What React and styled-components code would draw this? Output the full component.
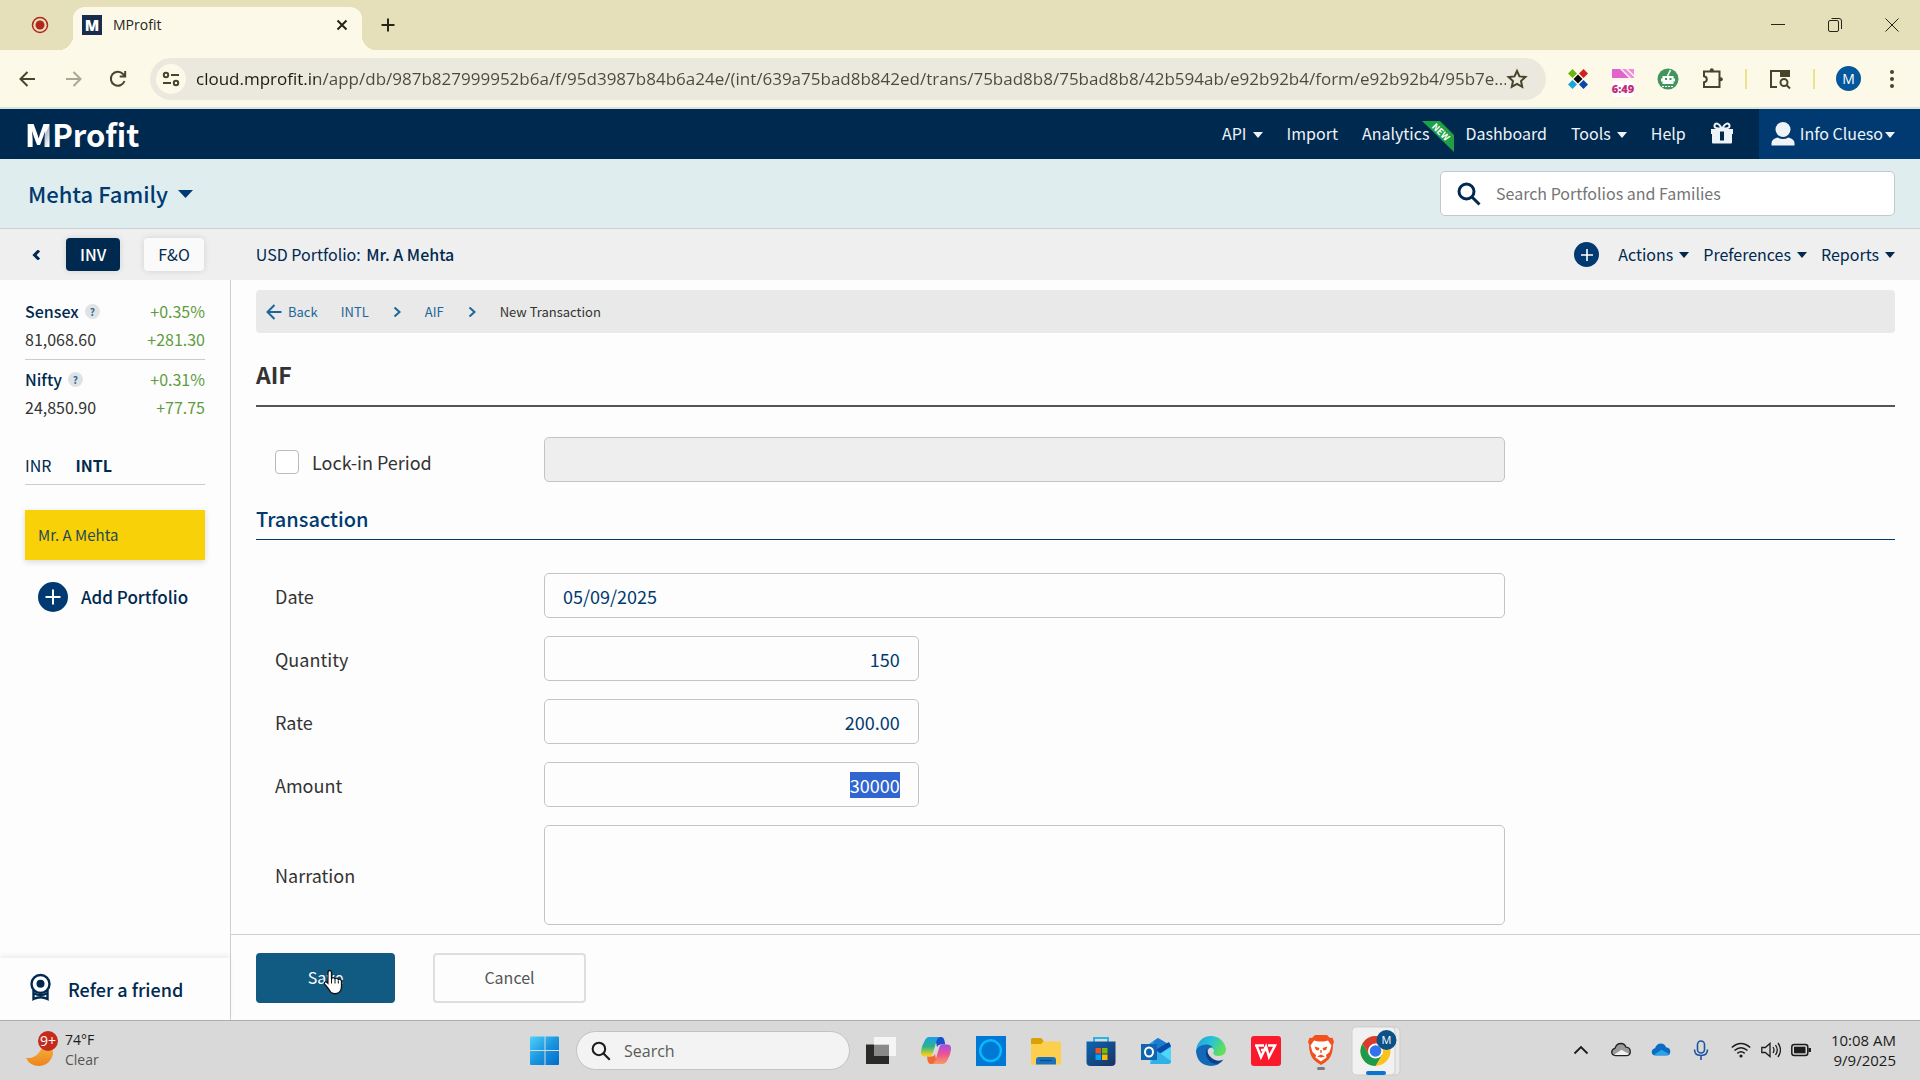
import { useEffect, useRef, useState } from "react";
import styled, { createGlobalStyle, css } from "styled-components";

const GlobalStyle = createGlobalStyle`
  * {
    box-sizing: border-box;
  }
  body {
    margin: 0;
    background: #fdfdfd;
    color: #333;
    font-family: "Noto Sans CJK SC", "Noto Sans", sans-serif;
    font-size: 16px;
    line-height: 24px;
  }
  button, input, textarea {
    font-family: inherit;
  }
  ::selection {
    background: #3165cf;
    color: #fff;
  }
`;

const systemFont = css`
  font-family: "Open Sans", "Noto Sans", sans-serif;
`;

const Page = styled.div`
  display: flex;
  flex-direction: column;
  min-height: 100vh;
  svg {
    display: block;
    flex: none;
  }
`;

const PlainButton = styled.button`
  display: flex;
  align-items: center;
  justify-content: center;
  padding: 0;
  border: none;
  background: none;
  color: inherit;
  font-size: inherit;
  font-weight: inherit;
  line-height: inherit;
  white-space: nowrap;
  cursor: pointer;
`;

/* ---------- browser ---------- */

const TabStrip = styled.div`
  ${systemFont}
  display: flex;
  align-items: flex-end;
  height: 50px;
  background: #e6e0ba;
  color: #26251a;
`;

const RecordSlot = styled.div`
  display: flex;
  align-items: center;
  justify-content: center;
  width: 73px;
  height: 50px;
  padding-left: 7px;
`;

const Tab = styled.div`
  position: relative;
  display: flex;
  align-items: center;
  width: 289px;
  height: 43px;
  padding: 0 13px 7px 9px;
  border-radius: 12px 12px 0 0;
  background: #fdf9e9;
  font-size: 14px;
  &::before,
  &::after {
    content: "";
    position: absolute;
    bottom: 0;
    width: 14px;
    height: 14px;
  }
  &::before {
    right: 100%;
    background: radial-gradient(circle at 0 0, transparent 14px, #fdf9e9 14px);
  }
  &::after {
    left: 100%;
    background: radial-gradient(circle at 100% 0, transparent 14px, #fdf9e9 14px);
  }
`;

const Favicon = styled.span`
  width: 20px;
  height: 20px;
  margin-right: 11px;
  background: #182c4c;
  color: #fff;
  font-size: 15px;
  font-weight: 800;
  line-height: 20px;
  text-align: center;
`;

const TabTitle = styled.span`
  flex: 1;
`;

const NewTab = styled(PlainButton)`
  width: 52px;
  height: 50px;
`;

const WindowControls = styled.div`
  display: flex;
  height: 50px;
  margin-left: auto;
  ${PlainButton} {
    width: 57px;
    height: 50px;
  }
`;

const BrowserBar = styled.div`
  ${systemFont}
  display: flex;
  align-items: center;
  height: 59px;
  padding: 0 20px 0 16px;
  border-bottom: 2px solid #d9e5dc;
  background: #fdf9e9;
  color: #47452b;
`;

const NavIcons = styled.div`
  display: flex;
  gap: 21px;
  margin-right: 20px;
`;

const AddressPill = styled.div`
  display: flex;
  align-items: center;
  flex: 1;
  height: 42px;
  padding: 0 18px 0 6px;
  border-radius: 21px;
  background: #ebe8de;
`;

const SiteInfo = styled(PlainButton)`
  width: 30px;
  height: 30px;
  margin-right: 10px;
  border-radius: 50%;
  background: #fdf9e9;
`;

/* host part is darker than the rest of the address */
const AddressInput = styled.input`
  flex: 1;
  min-width: 0;
  padding: 0;
  border: none;
  outline: none;
  background: linear-gradient(90deg, #1c1b12 119px, #4b493e 119px);
  background-clip: text;
  color: transparent;
  font-size: 17px;
  line-height: 28px;
`;

const Extensions = styled.div`
  display: flex;
  align-items: center;
  gap: 21px;
  margin-left: 21px;
`;

const TimerIcon = styled.span`
  display: flex;
  flex-direction: column;
  align-items: center;
  width: 26px;
  padding-top: 8px;
  color: #c22a7c;
  font-size: 11px;
  font-weight: 700;
  line-height: 16px;
  b {
    margin-top: 3px;
    border-radius: 4px;
    background: #fff;
  }
`;

const BarDivider = styled.span`
  width: 2px;
  height: 20px;
  background: #ece292;
`;

const Avatar = styled.span`
  width: 25px;
  height: 25px;
  border-radius: 50%;
  background: #04579b;
  color: #fff;
  font-size: 14px;
  line-height: 25px;
  text-align: center;
`;

/* ---------- application header ---------- */

const TopNav = styled.header`
  display: flex;
  align-items: center;
  height: 50px;
  padding-left: 25px;
  background: #00294f;
  color: #eef3f8;
`;

const Logo = styled.a`
  display: flex;
  color: #fff;
  font-size: 31px;
  font-weight: 700;
  line-height: 40px;
  text-decoration: none;
`;

const LogoInitial = styled.span`
  background: linear-gradient(115deg, #fff 64%, #b4bcc8 66%, #fff 84%);
  background-clip: text;
  color: transparent;
  font-weight: 900;
`;

const TopLinks = styled.nav`
  display: flex;
  align-items: center;
  gap: 24px;
  margin-left: auto;
  padding-right: 25px;
`;

const TopLink = styled.a`
  position: relative;
  margin-right: ${(props) => (props.$badge ? "12px" : "0")};
  padding-bottom: 2px;
  color: inherit;
  text-decoration: none;
`;

const NewRibbon = styled.svg`
  position: absolute;
  top: 0;
  left: 60px;
`;

const MenuButton = styled(PlainButton)`
  gap: ${(props) => props.$gap || 6}px;
  padding-bottom: 2px;
  svg {
    margin-top: 3px;
  }
`;

const UserMenu = styled(PlainButton)`
  gap: 5px;
  align-self: stretch;
  padding: 0 25px 0 12px;
  background: #013a70;
`;

const UserName = styled.span`
  display: flex;
  align-items: center;
  gap: 2px;
  padding-bottom: 2px;
  svg {
    margin-top: 3px;
  }
`;

const FamilyBar = styled.div`
  display: flex;
  align-items: center;
  justify-content: space-between;
  height: 70px;
  padding: 0 25px 0 28px;
  border-bottom: 1px solid #ccd2d3;
  background: #dfedef;
  color: #003a70;
  font-size: 22px;
  font-weight: 500;
`;

const SearchBox = styled.label`
  display: flex;
  align-items: center;
  flex: 0 1 455px;
  gap: 15px;
  height: 45px;
  padding: 0 16px;
  border: 1px solid #c3c8ca;
  border-radius: 5px;
  background: #fff;
  color: #00294f;
`;

const SearchInput = styled.input`
  flex: 1;
  min-width: 0;
  padding: 0 0 2px;
  border: none;
  outline: none;
  background: none;
  font-size: 16px;
  &::placeholder {
    color: #757575;
  }
`;

const SubBar = styled.div`
  display: flex;
  align-items: center;
  height: 51px;
  padding: 0 25px 0 32px;
  background: #efefef;
  color: #00294f;
`;

const SegmentButton = styled(PlainButton)`
  height: 33px;
  padding: 0 14px 2px;
  border-radius: 4px;
  margin-left: 24px;
  background: ${(props) => (props.$active ? "#00294f" : "#fafafa")};
  color: ${(props) => (props.$active ? "#fff" : "#00294f")};
  font-weight: ${(props) => (props.$active ? 500 : 400)};
  box-shadow: 0 0 6px rgba(0, 0, 0, 0.12);
`;

const PortfolioName = styled.div`
  margin-left: 52px;
  padding-bottom: 2px;
  strong {
    margin-left: 2px;
    font-weight: 500;
  }
`;

const SubActions = styled.div`
  display: flex;
  align-items: center;
  gap: 14px;
  margin-left: auto;
`;

const AddButton = styled(PlainButton)`
  margin-right: 5px;
`;

const AddCircle = styled.span`
  display: flex;
  align-items: center;
  justify-content: center;
  width: ${(props) => props.$size}px;
  height: ${(props) => props.$size}px;
  border-radius: 50%;
  background: #013a70;
`;

/* ---------- body ---------- */

const Body = styled.div`
  display: flex;
  flex: 1;
`;

const Sidebar = styled.aside`
  display: flex;
  flex-direction: column;
  width: 231px;
  flex: none;
  border-right: 1px solid #d0d0d0;
`;

const SidebarInner = styled.div`
  flex: 1;
  padding: 17px 25px 0;
`;

const IndexCard = styled.div`
  padding-bottom: 6px;
  margin-bottom: 5px;
  border-bottom: 1px solid ${(props) => (props.$last ? "transparent" : "#ccc")};
`;

const IndexRow = styled.div`
  display: flex;
  align-items: center;
  justify-content: space-between;
  height: 28px;
`;

const IndexName = styled.span`
  display: flex;
  align-items: center;
  gap: 6px;
  color: #00294f;
  font-weight: 500;
`;

const Help = styled(PlainButton)`
  width: 15px;
  height: 15px;
  border-radius: 50%;
  background: #dfe3e4;
  color: #2b6d98;
  font-size: 10px;
  font-weight: 700;
  line-height: 15px;
`;

const Gain = styled.span`
  color: #5d9c3f;
`;

const CurrencyTabs = styled.div`
  display: flex;
  gap: 24px;
  height: 39px;
  margin-top: 18px;
  border-bottom: 1px solid #ccc;
`;

const CurrencyTab = styled(PlainButton)`
  color: #00294f;
  font-weight: ${(props) => (props.$active ? 700 : 400)};
`;

const PortfolioItem = styled(PlainButton)`
  justify-content: flex-start;
  width: 100%;
  height: 50px;
  margin-top: 25px;
  padding: 0 13px;
  background: #f9d108;
  color: #1f4a54;
  font-size: 15px;
  box-shadow: 0 2px 6px rgba(0, 0, 0, 0.15);
`;

const AddPortfolio = styled(PlainButton)`
  gap: 13px;
  margin: 22px 0 0 13px;
  color: #00294f;
  font-size: 17px;
  font-weight: 500;
`;

const ReferLink = styled.a`
  display: flex;
  align-items: center;
  gap: 17px;
  height: 62px;
  padding: 0 30px;
  color: #00294f;
  font-size: 18px;
  font-weight: 500;
  text-decoration: none;
  box-shadow: 0 -3px 5px rgba(0, 0, 0, 0.06);
  svg {
    margin-bottom: 4px;
  }
`;

const Main = styled.main`
  display: flex;
  flex-direction: column;
  flex: 1;
  min-width: 0;
`;

const Content = styled.div`
  flex: 1;
  padding: 10px 25px 0;
`;

const Breadcrumb = styled.nav`
  display: flex;
  align-items: center;
  gap: 23px;
  height: 43px;
  padding: 0 10px;
  border-radius: 4px;
  background: #e9e9e9;
  font-size: 13px;
`;

const Crumb = styled.a`
  display: flex;
  align-items: center;
  gap: 6px;
  color: #1c6698;
  text-decoration: none;
`;

const PageTitle = styled.h1`
  margin: 0;
  padding: 25px 0 15px;
  border-bottom: 2px solid #555;
  color: #333;
  font-size: 23px;
  font-weight: 700;
  line-height: 32px;
`;

const SectionTitle = styled.h2`
  margin: 0 0 33px;
  padding: 21px 0 4px;
  border-bottom: 1px solid #003a70;
  color: #003a70;
  font-size: 20px;
  font-weight: 500;
  line-height: 32px;
`;

const Fields = styled.div`
  display: flex;
  flex-direction: column;
  gap: 18px;
  padding-top: ${(props) => props.$top || 0}px;
`;

const FieldRow = styled.div`
  display: grid;
  grid-template-columns: 269px minmax(0, 1fr) 390px;
  align-items: center;
  padding-left: 19px;
`;

const FieldLabel = styled.label`
  display: flex;
  align-items: center;
  gap: 13px;
  padding-top: ${(props) => (props.$check ? "5px" : "0")};
  font-size: 18px;
`;

const CheckBox = styled.input`
  appearance: none;
  width: 24px;
  height: 24px;
  margin: 0;
  border: 1px solid #bbb;
  border-radius: 4px;
  background: #fff;
`;

const fieldBox = css`
  border: 1px solid #c4c4c4;
  border-radius: 5px;
  outline: none;
  background: #fdfdfd;
  color: #003a70;
  font-size: 18px;
`;

const TextField = styled.input`
  ${fieldBox}
  width: ${(props) => (props.$short ? "39%" : "100%")};
  height: 45px;
  padding: 0 18px;
  text-align: ${(props) => (props.$short ? "right" : "left")};
  caret-color: transparent;
  &:disabled {
    background: #eee;
  }
`;

const NarrationField = styled.textarea`
  ${fieldBox}
  display: block;
  width: 100%;
  height: 100px;
  padding: 10px 18px;
  resize: none;
`;

const FormFooter = styled.footer`
  display: flex;
  align-items: center;
  gap: 38px;
  height: 86px;
  padding: 1px 25px 0;
  border-top: 1px solid #d0d0d0;
`;

const FooterButton = styled(PlainButton)`
  position: relative;
  width: ${(props) => (props.$primary ? 139 : 153)}px;
  height: 50px;
  padding-bottom: 2px;
  border: 2px solid ${(props) => (props.$primary ? "#115a82" : "#dedede")};
  border-radius: 4px;
  background: ${(props) => (props.$primary ? "#115a82" : "#fdfdfd")};
  color: ${(props) => (props.$primary ? "#fff" : "#555")};
`;

const Pointer = styled.svg`
  position: absolute;
  top: 14px;
  left: 64px;
`;

/* ---------- taskbar ---------- */

const Taskbar = styled.div`
  ${systemFont}
  display: grid;
  grid-template-columns: 1fr auto 1fr;
  align-items: center;
  height: 60px;
  padding: 0 24px 0 26px;
  border-top: 1px solid #adadad;
  background: #d9d9d9;
  color: #1c1c1c;
  font-size: 14px;
  line-height: 20px;
`;

const Weather = styled.div`
  display: flex;
  align-items: center;
  gap: 5px;
  padding-bottom: 2px;
  span {
    display: block;
    color: #555;
  }
`;

const Dock = styled.div`
  display: flex;
  align-items: center;
  gap: 25px;
  margin-left: 9px;
`;

const ActiveApp = styled.div`
  margin-left: -10px;
`;

const TaskSearch = styled.label`
  display: flex;
  align-items: center;
  gap: 13px;
  width: 274px;
  height: 39px;
  margin: 0 -9px;
  padding: 0 14px;
  border: 1px solid #c2c2c2;
  border-radius: 20px;
  background: #f3f3f3;
  input {
    width: 200px;
    padding: 0;
    border: none;
    background: none;
    font-size: 16px;
  }
  input::placeholder {
    color: #5b5b5b;
  }
`;

const Tray = styled.div`
  display: flex;
  align-items: center;
  justify-content: flex-end;
  gap: 20px;
  padding-bottom: 2px;
`;

const TrayGroup = styled.div`
  display: flex;
  gap: 10px;
`;

const Clock = styled.div`
  font-size: 15px;
  text-align: right;
`;

/* ---------- icons ---------- */

const Stroke = ({ size = 20, width = 2, children, ...rest }) => (
  <svg
    width={size}
    height={size}
    viewBox={`0 0 ${size} ${size}`}
    fill="none"
    stroke="currentColor"
    strokeWidth={width}
    {...rest}
  >
    {children}
  </svg>
);

const Caret = ({ w = 10, h = 6 }) => (
  <svg width={w} height={h} viewBox="0 0 10 6" preserveAspectRatio="none">
    <path d="M0 0h10L5 6z" fill="currentColor" />
  </svg>
);

const SearchIcon = ({ size = 24, width = 3 }) => (
  <svg
    width={size}
    height={size}
    viewBox="0 0 24 24"
    fill="none"
    stroke="currentColor"
    strokeWidth={width}
  >
    <circle cx="9.5" cy="9.5" r="7.5" />
    <path d="M15 15l7.5 7.5" />
  </svg>
);

const Plus = ({ size = 20 }) => (
  <svg width={size} height={size} viewBox="0 0 20 20">
    <path d="M10 2.5v15M2.5 10h15" stroke="#fff" strokeWidth="2" />
  </svg>
);

const GiftIcon = () => (
  <svg width="24" height="22" viewBox="0 0 24 22" fill="#eef3f8">
    <path d="M1 7h22v5H1zM2 12h20v8.5q0 1-1 1H3q-1 0-1-1z" />
    <path
      d="M11.5 6.500C9 .5 5 .5 4.500 3.500S8 6.500 11.500 6.500zM12.500 6.500C15 .5 19 .5 19.500 3.500S16 6.500 12.500 6.500z"
      fill="none"
      stroke="#eef3f8"
      strokeWidth="2"
    />
    <path d="M10 9.500h4v9h-4z" fill="#00294f" />
  </svg>
);

const UserIcon = () => (
  <svg width="24" height="24" viewBox="0 0 24 24" fill="#eef3f8">
    <circle cx="12" cy="7.5" r="7.5" />
    <path d="M.5 23.500v-2.500q0-4 6-5.500 5.500 3 11 0 6 1.500 6 5.500v2.500z" />
  </svg>
);

const AwardIcon = () => (
  <svg
    width="21"
    height="28"
    viewBox="0 0 21 28"
    fill="none"
    stroke="#00294f"
    strokeWidth="2.4"
  >
    <circle cx="10.500" cy="11" r="9" />
    <circle cx="10.500" cy="10.800" r="4" fill="#00294f" stroke="none" />
    <path d="M3.500 17v9q7-3.500 14 0V17" />
    <path d="M4 20.500q6.500 3 13 0" />
  </svg>
);

const PointerIcon = () => (
  <Pointer width="22" height="27" viewBox="0 0 22 27">
    <path
      d="M6 3.500Q6 1.500 7.700 1.500T9.500 3.500V10q.3-1.500 1.800-1.400T13 10.300q.3-1.300 1.700-1.200T16.300 11q.3-1 1.600-.8T19.500 12.200V18q0 3.500-2.500 5.500-4 2.500-8 0C7 20.500 4.500 17 2.700 15.200q-1-1.200.2-2t3 1z"
      fill="#fff"
      stroke="#111"
      strokeWidth="1.300"
    />
    <path d="M9.500 10v4.500M13 10.500v4M16.300 11.500v3" stroke="#111" />
  </Pointer>
);

const WindowsIcon = () => (
  <svg width="30" height="30" viewBox="0 0 30 30">
    <defs>
      <linearGradient id="win" x1="0" y1="0" x2="1" y2="1">
        <stop offset="0" stopColor="#4fd2fb" />
        <stop offset=".5" stopColor="#1a96e0" />
        <stop offset="1" stopColor="#006bca" />
      </linearGradient>
    </defs>
    <path d="M1 .5h13.500V14H0V1.500zM15.500.5H28q1 0 1 1V14H15.500zM0 15h14.500v14H1q-1 0-1-1zM15.500 15H29v13q0 1-1 1H15.500z" fill="url(#win)" />
  </svg>
);

const TaskViewIcon = () => (
  <svg width="30" height="30" viewBox="0 0 30 30">
    <path d="M0 8.500h23V28H0z" fill="#2a2a28" />
    <path d="M8 1h22v19H8z" fill="#fff" opacity=".45" />
    <path d="M8 1h22v19h-7V8.500H8z" fill="#f8f8f8" opacity=".8" />
  </svg>
);

const CopilotIcon = () => (
  <svg width="30" height="30" viewBox="0 0 30 30">
    <defs>
      <linearGradient id="copA" x1="0" y1="0" x2="0" y2="1">
        <stop offset="0" stopColor="#1aa0e8" />
        <stop offset=".5" stopColor="#2bb38b" />
        <stop offset=".9" stopColor="#e9cf20" />
      </linearGradient>
      <linearGradient id="copB" x1="0" y1="0" x2="0" y2="1">
        <stop offset="0" stopColor="#a34de4" />
        <stop offset=".5" stopColor="#ee5494" />
        <stop offset="1" stopColor="#f79c5b" />
      </linearGradient>
    </defs>
    <path d="M14 1h6q2.500 0 3.300 3l1 4.500h-4.800q-2.500 0-3.500 2.500z" fill="#1a4fd0" />
    <path d="M16 28H10q-2.500 0-3.300-3L6 20.500h4.500q2.500 0 3.500-2.500z" fill="#f06a35" />
    <path d="M8 1h11q-2.500.5-3.500 4l-3.700 12.500q-.8 3-3.600 3H4Q-.5 20.500 0 15.500.5 10 4 4q1.500-3 4-3z" fill="url(#copA)" />
    <path d="M22 28H11q2.500-.5 3.500-4l3.700-12.500q.8-3 3.600-3H26q4.500 0 4 5-.5 5.500-4 11.500-1.500 3-4 3z" fill="url(#copB)" />
  </svg>
);

const AlexaIcon = () => (
  <svg width="30" height="30" viewBox="0 0 30 30">
    <path d="M0 0h30v30H0z" fill="#0078d6" />
    <path d="M15 25A10.300 10.300 0 1 1 19 24Q17 25 15 25z" fill="none" stroke="#0bb8f8" strokeWidth="2.500" />
  </svg>
);

const FolderIcon = () => (
  <svg width="30" height="30" viewBox="0 0 30 30">
    <path d="M0 3.500Q0 2 1.500 2h8q1 0 1.700 1L13 6v6H0z" fill="#d9a106" />
    <path d="M0 8h10l2.500-2.500H28.500Q30 5.500 30 7v20q0 1.500-1.500 1.500H1.500Q0 28.500 0 27z" fill="#fdcf4d" />
    <path d="M5 28.500V24q0-3 3-3h14q3 0 3 3v4.500z" fill="#1a72bf" />
    <path d="M9 24.500h12" stroke="#0c4c8c" strokeWidth="1.200" />
  </svg>
);

const StoreIcon = () => (
  <svg width="30" height="30" viewBox="0 0 30 30">
    <defs>
      <linearGradient id="store" x1="0" y1="0" x2="1" y2="1">
        <stop offset="0" stopColor="#0a67b4" />
        <stop offset="1" stopColor="#1c3160" />
      </linearGradient>
    </defs>
    <path d="M8 7V2h14v5" fill="none" stroke="#26b6ec" strokeWidth="2" />
    <path d="M.5 5.500h29V26q0 4-4 4H4.500q-4 0-4-4z" fill="url(#store)" />
    <path d="M9.500 12H15v5.500H9.500z" fill="#f25022" />
    <path d="M16 12h5.500v5.500H16z" fill="#7fba00" />
    <path d="M9.500 18.500H15V24H9.500z" fill="#00a4ef" />
    <path d="M16 18.500h5.500V24H16z" fill="#ffb900" />
  </svg>
);

const OutlookIcon = () => (
  <svg width="30" height="30" viewBox="0 0 30 30">
    <path d="M5 10L17 2l13 8v8H5z" fill="#1fa0e0" />
    <path d="M12 5.500L17 2l11 6.500-11 8z" fill="#1b7bd0" />
    <path d="M16 13l12-7 2 4-13 9z" fill="#0a4aa8" />
    <path d="M9 24l21-13v14q0 3-3 3H12q-3 0-3-3z" fill="#4fd5f5" />
    <path d="M9 28l7-13 14 10q0 3-3 3z" fill="#2fb1e8" />
    <path d="M0 8h16v16H0z" fill="#1264ae" />
    <ellipse cx="8" cy="16" rx="4" ry="4.600" fill="none" stroke="#fff" strokeWidth="2" />
  </svg>
);

const EdgeIcon = () => (
  <svg width="30" height="30" viewBox="0 0 30 30">
    <defs>
      <linearGradient id="edge" x1="0" y1="0" x2="1" y2=".4">
        <stop offset="0" stopColor="#1f9fe0" />
        <stop offset=".55" stopColor="#2bc3d2" />
        <stop offset="1" stopColor="#5ee05a" />
      </linearGradient>
    </defs>
    <path d="M15 0A15 15 0 0 1 30 13q0 7-7.500 7-6 0-5-4 1-1-.3-3Q15 10 11 10 3 10 .2 17A15 15 0 0 1 15 0z" fill="url(#edge)" />
    <path d="M0 15Q2 8.500 10.500 8.500q4.500 0 6.300 3-5-.5-5.300 4.500 0 9 11 9 2.500 0 4.500-1.200Q23 30 15 30 1 29 0 15z" fill="#1368b8" />
    <path d="M11 12.500q-2.500 5 .5 10T21 28q4-1.200 6.500-4.500Q23 26 18 23.500T11.500 16z" fill="#0c3f86" />
  </svg>
);

const WpsIcon = () => (
  <svg width="30" height="30" viewBox="0 0 30 30">
    <rect width="30" height="30" rx="3" fill="#fb1a2c" />
    <path d="M4 9.500h9M5.500 9.500L10 21l5-10.500L18 21l6-11.500h-7M10 14h5" fill="none" stroke="#fff" strokeWidth="2.500" />
  </svg>
);

const BraveIcon = () => (
  <svg width="30" height="39" viewBox="0 0 30 39">
    <g transform="translate(0 4)">
      <path d="M9 0h12l3 3 2.500-.3L28 7l-1 2.500q0 9-4 14.500-2.500 3-8 6-5.500-3-8-6-4-5.500-4-14.500L2 7l1.500-4.300L6 3z" fill="#f4501e" />
      <path d="M8 5.500l4 1h6l4-1 3.500 5-2 6.500-3.500 3 .5 2.500-5.500 4-5.500-4 .5-2.500-3.500-3-2-6.500z" fill="#fff" />
      <path d="M8.500 11.500l5 1.500-1 2.500-2.500-.5zM21.500 11.500l-5 1.500 1 2.500 2.500-.5zM11 21.500l4-2 4 2-4 1zM14.300 15h1.400v3h-1.400z" fill="#f4501e" />
    </g>
    <rect x="11" y="36" width="8" height="3" rx="1.500" fill="#7c7c7c" />
  </svg>
);

const ChromeIcon = () => (
  <svg width="50" height="50" viewBox="0 0 50 50">
    <rect x="5" y="1" width="44" height="48" rx="4" fill="#e9e9e9" stroke="#cbcbcb" />
    <rect x="1" y="1" width="43" height="48" rx="4" fill="#f1f1f1" stroke="#cfcfcf" />
    <circle cx="24.500" cy="25" r="15" fill="#fcc31e" />
    <path d="M11.500 17.500A15 15 0 0 1 37.500 17.500H24.500L18 28.500z" fill="#da3b2d" />
    <path d="M11.500 17.500A15 15 0 0 0 24.500 40L31 28.800H18z" fill="#1e9a4c" />
    <circle cx="24.500" cy="25" r="7.500" fill="#fff" />
    <circle cx="24.500" cy="25" r="5.800" fill="#2f74e8" />
    <circle cx="35.500" cy="14" r="10" fill="#0b5087" />
    <text x="35.500" y="18" fill="#fff" fontSize="11" textAnchor="middle">M</text>
    <rect x="15" y="45" width="20" height="4" rx="2" fill="#0a74d1" />
  </svg>
);

const CloudIcon = ({ top, bottom, outline }) => (
  <svg width="20" height="15" viewBox="0 0 20 15">
    <path
      d="M4.500 13.500q-3.700 0-3.800-3.400Q.9 7 4 6.300 5.500 1.500 10 1.500q3.600 0 5 3.700 4.200.4 4.300 4.200 0 4.100-4 4.100z"
      fill={top}
      stroke={outline}
      strokeWidth="1.300"
    />
    <path d="M3 12.800l7.500-5 7.500 4.200q-1.200 1-2.500 1h-11z" fill={bottom} />
  </svg>
);

const MoonIcon = () => (
  <svg width="34" height="40" viewBox="0 0 34 40">
    <defs>
      <linearGradient id="moon" x1="0" y1="0" x2="0" y2="1">
        <stop offset="0" stopColor="#f3b53a" />
        <stop offset="1" stopColor="#ee8220" />
      </linearGradient>
    </defs>
    <path d="M0 28q9 1 14-7t11-6q4 8 0 14-4 7-12 7Q4 36 0 28z" fill="url(#moon)" />
    <circle cx="22" cy="11" r="10" fill="#c42b1c" />
    <text x="22" y="16" fill="#fff" fontSize="14" textAnchor="middle">9+</text>
  </svg>
);

const indices = [
  { name: "Sensex", value: "81,068.60", percent: "+0.35%", change: "+281.30" },
  { name: "Nifty", value: "24,850.90", percent: "+0.31%", change: "+77.75" },
];

const Browser = () => (
  <>
    <TabStrip>
      <RecordSlot>
        <svg width="18" height="18" viewBox="0 0 18 18">
          <circle cx="9" cy="9" r="7.500" fill="none" stroke="#b3261e" strokeWidth="1.500" />
          <circle cx="9" cy="9" r="4.500" fill="#b3261e" />
        </svg>
      </RecordSlot>
      <Tab>
        <Favicon>M</Favicon>
        <TabTitle>MProfit</TabTitle>
        <PlainButton aria-label="Close tab">
          <Stroke size={14}>
            <path d="M2.500 2.500l9 9M11.500 2.500l-9 9" />
          </Stroke>
        </PlainButton>
      </Tab>
      <NewTab aria-label="New tab">
        <Stroke size={16}>
          <path d="M8 1.500v13M1.500 8h13" />
        </Stroke>
      </NewTab>
      <WindowControls>
        <PlainButton aria-label="Minimize">
          <Stroke size={14} width={1}>
            <path d="M0 6.500h14" />
          </Stroke>
        </PlainButton>
        <PlainButton aria-label="Restore">
          <Stroke size={14} width={1}>
            <rect x=".5" y="2.500" width="10" height="11" rx="1.500" />
            <path d="M3.500.5h7.500q2.500 0 2.500 2.500v8" />
          </Stroke>
        </PlainButton>
        <PlainButton aria-label="Close window">
          <Stroke size={14} width={1}>
            <path d="M.5.5l13 13M13.500.5l-13 13" />
          </Stroke>
        </PlainButton>
      </WindowControls>
    </TabStrip>
    <BrowserBar>
      <NavIcons>
        <PlainButton aria-label="Back">
          <Stroke size={24}>
            <path d="M19 12H5M11.500 5L4.500 12l7 7" />
          </Stroke>
        </PlainButton>
        <PlainButton aria-label="Forward">
          <Stroke size={24} opacity={0.45}>
            <path d="M5 12h14M12.500 5l7 7-7 7" />
          </Stroke>
        </PlainButton>
        <PlainButton aria-label="Reload">
          <Stroke size={24}>
            <path d="M18.500 14A7 7 0 1 1 17 7l2 2M19.200 4v5.500h-5.500" />
          </Stroke>
        </PlainButton>
      </NavIcons>
      <AddressPill>
        <SiteInfo aria-label="Site information">
          <Stroke size={18}>
            <circle cx="4" cy="5" r="2.200" />
            <circle cx="14" cy="13" r="2.200" />
            <path d="M9 5h8M1 13h8" />
          </Stroke>
        </SiteInfo>
        <AddressInput
          aria-label="Address"
          readOnly
          value="cloud.mprofit.in/app/db/987b827999952b6a/f/95d3987b84b6a24e/(int/639a75bad8b842ed/trans/75bad8b8/75bad8b8/42b594ab/e92b92b4/form/e92b92b4/95b7e..."
        />
        <PlainButton aria-label="Bookmark">
          <Stroke size={22}>
            <path d="M11 3l2.500 5.400 5.900.6-4.400 4 1.200 5.800-5.200-3-5.200 3L7 13 2.600 9l5.900-.6z" />
          </Stroke>
        </PlainButton>
      </AddressPill>
      <Extensions>
        <svg width="22" height="22" viewBox="0 0 22 22">
          <path d="M5.500 1l4.500 4.500-4.500 4.500L1 5.500z" fill="#6cb60b" />
          <path d="M16.500 1L21 5.500 16.500 10 12 5.500z" fill="#d2201f" />
          <path d="M11 6.500l4.500 4.500-4.500 4.500L6.500 11z" fill="#0a0a0a" />
          <path d="M5.500 12l4.500 4.500L5.500 21 1 16.500z" fill="#16a5dc" />
          <path d="M16.500 12l4.500 4.500-4.500 4.500-4.500-4.500z" fill="#0c46a8" />
        </svg>
        <TimerIcon>
          <svg width="22" height="9" viewBox="0 0 22 9">
            <path d="M0 0h8l9 9H0z" fill="#e263d0" />
            <path d="M10 0h4l8 8v1h-3zM16 0h6v6z" fill="#ee8be0" />
          </svg>
          <b>6:49</b>
        </TimerIcon>
        <svg width="22" height="22" viewBox="0 0 22 22">
          <circle cx="11" cy="11" r="10.500" fill="#43965b" />
          <path d="M5.500 8h11v8h-11zM4 10.500h14v3H4z" fill="#fff" />
          <path d="M10.500 8l3-6" stroke="#fff" strokeWidth="1.500" />
          <path d="M8 10h2v2H8zM12.500 10h2v2h-2z" fill="#43965b" />
          <path d="M5 18.500h12" stroke="#fff" strokeDasharray="2 1" />
        </svg>
        <Stroke size={24}>
          <path d="M4 4.500h15.500v15.500H4v-4.700q2.800-.3 2.800-3T4 9.200z" />
          <circle cx="11.800" cy="3.300" r="2" fill="currentColor" stroke="none" />
          <circle cx="20.800" cy="12.200" r="2" fill="currentColor" stroke="none" />
        </Stroke>
        <BarDivider />
        <Stroke size={24}>
          <path d="M9 20H3V4h18v6" />
          <path d="M13 4h8v5h-8z" fill="currentColor" />
          <circle cx="16" cy="15.500" r="3.500" />
          <path d="M18.500 18l3.500 3.500" />
        </Stroke>
        <BarDivider />
        <Avatar>M</Avatar>
        <svg width="18" height="20" viewBox="-2 0 18 20" fill="#47452b">
          <circle cx="8" cy="3" r="2" />
          <circle cx="8" cy="10" r="2" />
          <circle cx="8" cy="17" r="2" />
        </svg>
      </Extensions>
    </BrowserBar>
  </>
);

const AppHeader = () => (
  <>
    <TopNav>
      <Logo href="#home">
        <LogoInitial>M</LogoInitial>Profit
      </Logo>
      <TopLinks>
        <MenuButton>
          API <Caret />
        </MenuButton>
        <TopLink href="#import">Import</TopLink>
        <TopLink href="#analytics" $badge>
          Analytics
          <NewRibbon width="32" height="31" viewBox="0 0 32 31">
            <path d="M0 0h18l14 14v17z" fill="#1fa045" />
            <text
              x="18"
              y="14"
              fill="#fff"
              fontSize="9"
              fontWeight="700"
              textAnchor="middle"
              transform="rotate(45 18 12)"
            >
              NEW
            </text>
          </NewRibbon>
        </TopLink>
        <TopLink href="#dashboard">Dashboard</TopLink>
        <MenuButton>
          Tools <Caret />
        </MenuButton>
        <TopLink href="#help">Help</TopLink>
        <TopLink href="#gifts" aria-label="Gifts">
          <GiftIcon />
        </TopLink>
      </TopLinks>
      <UserMenu>
        <UserIcon />
        <UserName>
          Info Clueso <Caret />
        </UserName>
      </UserMenu>
    </TopNav>
    <FamilyBar>
      <MenuButton $gap={10}>
        Mehta Family <Caret w={15} h={8} />
      </MenuButton>
      <SearchBox>
        <SearchIcon />
        <SearchInput
          aria-label="Search"
          placeholder="Search Portfolios and Families"
        />
      </SearchBox>
    </FamilyBar>
    <SubBar>
      <PlainButton aria-label="Collapse sidebar">
        <Stroke size={10} width={3}>
          <path d="M7 0.500L2.500 5 7 9.500" />
        </Stroke>
      </PlainButton>
      <SegmentButton $active>INV</SegmentButton>
      <SegmentButton>F&amp;O</SegmentButton>
      <PortfolioName>
        USD Portfolio: <strong>Mr. A Mehta</strong>
      </PortfolioName>
      <SubActions>
        <AddButton aria-label="Add">
          <AddCircle $size={25}>
            <Plus size={16} />
          </AddCircle>
        </AddButton>
        <MenuButton>
          Actions <Caret />
        </MenuButton>
        <MenuButton>
          Preferences <Caret />
        </MenuButton>
        <MenuButton>
          Reports <Caret />
        </MenuButton>
      </SubActions>
    </SubBar>
  </>
);

const SideMenu = () => (
  <Sidebar>
    <SidebarInner>
      {indices.map((item, i) => (
        <IndexCard key={item.name} $last={i === indices.length - 1}>
          <IndexRow>
            <IndexName>
              {item.name} <Help aria-label={`About ${item.name}`}>?</Help>
            </IndexName>
            <Gain>{item.percent}</Gain>
          </IndexRow>
          <IndexRow>
            <span>{item.value}</span>
            <Gain>{item.change}</Gain>
          </IndexRow>
        </IndexCard>
      ))}
      <CurrencyTabs>
        <CurrencyTab>INR</CurrencyTab>
        <CurrencyTab $active>INTL</CurrencyTab>
      </CurrencyTabs>
      <PortfolioItem>Mr. A Mehta</PortfolioItem>
      <AddPortfolio>
        <AddCircle $size={30}>
          <Plus />
        </AddCircle>
        Add Portfolio
      </AddPortfolio>
    </SidebarInner>
    <ReferLink href="#refer">
      <AwardIcon />
      Refer a friend
    </ReferLink>
  </Sidebar>
);

const CrumbChevron = () => (
  <Stroke size={10} color="#1c6698">
    <path d="M2.500 0.500L7.500 5l-5 4.500" />
  </Stroke>
);

const TransactionForm = () => {
  const amountRef = useRef(null);
  const [form, setForm] = useState({
    date: "05/09/2025",
    quantity: "150",
    rate: "200.00",
    amount: "30000",
    narration: "",
  });

  useEffect(() => {
    amountRef.current.focus();
    amountRef.current.select();
  }, []);

  const handleChange = (e) => {
    const { name, value } = e.target;
    setForm((prevForm) => ({ ...prevForm, [name]: value }));
  };

  return (
    <Main>
      <Content>
        <Breadcrumb>
          <Crumb href="#back">
            <Stroke size={16}>
              <path d="M15.500 8H2M8.500 1L1.500 8l7 7" />
            </Stroke>
            Back
          </Crumb>
          <Crumb href="#intl">INTL</Crumb>
          <CrumbChevron />
          <Crumb href="#aif">AIF</Crumb>
          <CrumbChevron />
          <span>New Transaction</span>
        </Breadcrumb>
        <PageTitle>AIF</PageTitle>
        <Fields $top={30}>
          <FieldRow>
            <FieldLabel $check>
              <CheckBox type="checkbox" />
              Lock-in Period
            </FieldLabel>
            <TextField aria-label="Lock-in Period" disabled />
          </FieldRow>
        </Fields>
        <SectionTitle>Transaction</SectionTitle>
        <Fields>
          <FieldRow>
            <FieldLabel htmlFor="date">Date</FieldLabel>
            <TextField
              id="date"
              name="date"
              value={form.date}
              onChange={handleChange}
            />
          </FieldRow>
          <FieldRow>
            <FieldLabel htmlFor="quantity">Quantity</FieldLabel>
            <TextField
              id="quantity"
              name="quantity"
              $short
              value={form.quantity}
              onChange={handleChange}
            />
          </FieldRow>
          <FieldRow>
            <FieldLabel htmlFor="rate">Rate</FieldLabel>
            <TextField
              id="rate"
              name="rate"
              $short
              value={form.rate}
              onChange={handleChange}
            />
          </FieldRow>
          <FieldRow>
            <FieldLabel htmlFor="amount">Amount</FieldLabel>
            <TextField
              id="amount"
              name="amount"
              $short
              ref={amountRef}
              value={form.amount}
              onChange={handleChange}
            />
          </FieldRow>
          <FieldRow>
            <FieldLabel htmlFor="narration">Narration</FieldLabel>
            <NarrationField
              id="narration"
              name="narration"
              value={form.narration}
              onChange={handleChange}
            />
          </FieldRow>
        </Fields>
      </Content>
      <FormFooter>
        <FooterButton $primary>
          Save
          <PointerIcon />
        </FooterButton>
        <FooterButton>Cancel</FooterButton>
      </FormFooter>
    </Main>
  );
};

const DesktopBar = () => (
  <Taskbar>
    <Weather>
      <MoonIcon />
      <div>
        74°F
        <span>Clear</span>
      </div>
    </Weather>
    <Dock>
      <WindowsIcon />
      <TaskSearch>
        <SearchIcon size={20} width={2.5} />
        <input aria-label="Search" placeholder="Search" />
      </TaskSearch>
      <TaskViewIcon />
      <CopilotIcon />
      <AlexaIcon />
      <FolderIcon />
      <StoreIcon />
      <OutlookIcon />
      <EdgeIcon />
      <WpsIcon />
      <BraveIcon />
      <ActiveApp>
        <ChromeIcon />
      </ActiveApp>
    </Dock>
    <Tray>
      <Stroke size={20} width={1.8}>
        <path d="M3.500 13.500L10 7l6.500 6.500" />
      </Stroke>
      <CloudIcon top="#9b9b9b" bottom="#f2f2f2" outline="#222" />
      <CloudIcon top="#0a6cc4" bottom="#27a5ec" outline="none" />
      <Stroke size={20} width={1.6} color="#1f54a0">
        <rect x="6.500" y="1" width="7" height="12" rx="3.500" />
        <path d="M3.500 9.500q0 6 6.500 6t6.500-6M10 15.500V20" />
      </Stroke>
      <TrayGroup>
        <Stroke size={20} width={1.5}>
          <path d="M.8 7.500q9.200-8 18.400 0M3.500 10.500q6.500-5.500 13 0M6.300 13.300q3.700-3 7.400 0" />
          <circle cx="10" cy="16" r="1.600" fill="currentColor" stroke="none" />
        </Stroke>
        <Stroke size={20} width={1.3}>
          <path d="M.8 7.500h3.500L9 3.500v13l-4.700-4H.8zM12 7q2 3 0 6M14.500 5q3.500 5 0 10M17 3q5 7 0 14" />
        </Stroke>
        <Stroke size={20} width={1.5}>
          <rect x=".8" y="4.500" width="16" height="11" rx="2.500" />
          <rect x="3" y="6.700" width="11.500" height="6.600" fill="currentColor" stroke="none" />
          <path d="M18.700 8v4" strokeWidth="2.500" />
        </Stroke>
      </TrayGroup>
      <Clock>
        10:08 AM
        <br />
        9/9/2025
      </Clock>
    </Tray>
  </Taskbar>
);

export default function App() {
  return (
    <Page>
      <GlobalStyle />
      <Browser />
      <AppHeader />
      <Body>
        <SideMenu />
        <TransactionForm />
      </Body>
      <DesktopBar />
    </Page>
  );
}
